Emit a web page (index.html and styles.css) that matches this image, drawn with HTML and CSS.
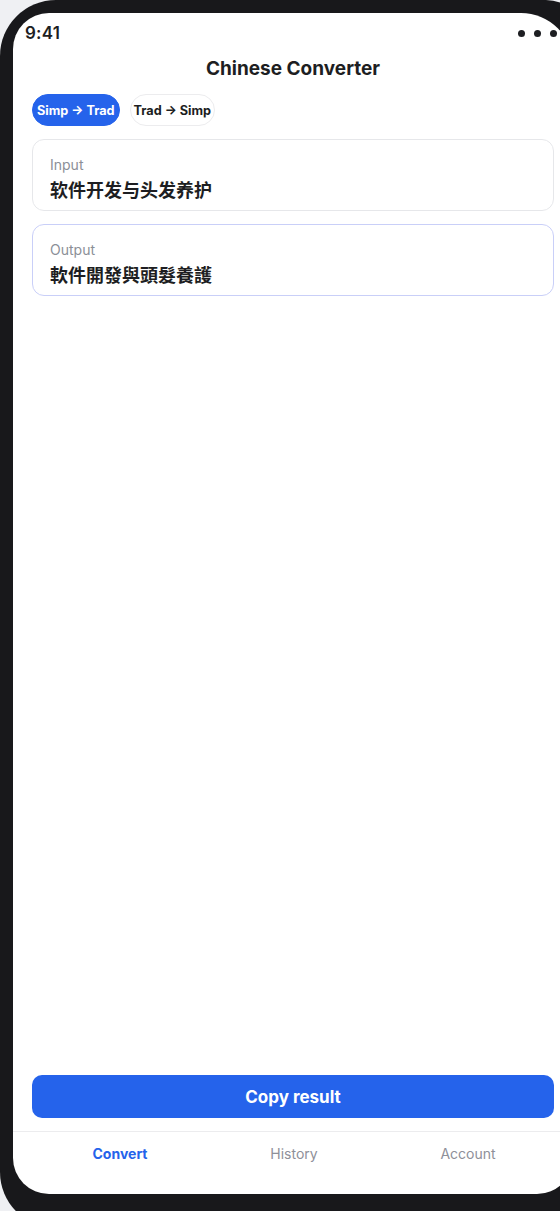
FILE: index.html
```html
<!DOCTYPE html>
<html lang="en">
<head>
<meta charset="utf-8">
<title>Chinese Converter</title>
<link rel="stylesheet" href="styles.css">
</head>
<body>
<div class="device">
  <div class="screen">
    <div class="status">
      <span class="time">9:41</span>
      <span class="dots"><i></i><i></i><i></i></span>
    </div>
    <h1 class="title">Chinese Converter</h1>
    <div class="modes">
      <button class="pill pill-active">Simp → Trad</button>
      <button class="pill">Trad → Simp</button>
    </div>
    <div class="card">
      <div class="label">Input</div>
      <div class="value">软件开发与头发养护</div>
    </div>
    <div class="card card-output">
      <div class="label">Output</div>
      <div class="value">軟件開發與頭髮養護</div>
    </div>
    <div class="spacer"></div>
    <button class="copy">Copy result</button>
    <nav class="tabs">
      <span class="tab tab-active">Convert</span>
      <span class="tab">History</span>
      <span class="tab">Account</span>
    </nav>
  </div>
</div>
</body>
</html>
```
FILE: styles.css
```css
* { box-sizing: border-box; }
html, body {
  margin: 0;
  padding: 0;
  background: #eff0f3;
  overflow: hidden;
  height: 1211px;
}
body {
  font-family: Inter, "Noto Sans", "Noto Sans CJK SC", sans-serif;
  color: #1d1e22;
}
.device {
  width: 586px;
  height: 1228px;
  background: #18181b;
  border-radius: 56px 40px 56px 56px;
  padding: 13px;
}
.screen {
  width: 560px;
  height: 1181px;
  background: #ffffff;
  border-radius: 36px 52px 36px 36px;
  overflow: hidden;
  display: flex;
  flex-direction: column;
}
.status {
  height: 40px;
  display: flex;
  align-items: center;
  justify-content: space-between;
  padding: 0 16px 0 12px;
}
.time {
  font-size: 17px;
  font-weight: 600;
  letter-spacing: 0.2px;
  color: #1d1e22;
}
.dots {
  display: flex;
  gap: 9px;
}
.dots i {
  display: block;
  width: 7px;
  height: 7px;
  border-radius: 50%;
  background: #1d1e22;
}
.title {
  margin: 0;
  height: 32px;
  line-height: 32px;
  text-align: center;
  font-size: 19px;
  font-weight: 700;
  color: #1d1e22;
}
.modes {
  margin-top: 9px;
  padding: 0 19px;
  display: flex;
  gap: 10px;
}
.pill {
  height: 32px;
  border-radius: 16px;
  font-family: Inter, "Noto Sans", sans-serif;
  font-size: 12.7px;
  font-weight: 700;
  padding: 0 3px;
  border: 1px solid #ececee;
  background: #ffffff;
  color: #1d1e22;
  cursor: pointer;
}
.pill-active {
  background: #2563eb;
  border-color: #2563eb;
  color: #ffffff;
  padding: 0 4px;
}
.card {
  margin: 13px 19px 0 19px;
  height: 72px;
  border: 1px solid #e6e7ea;
  border-radius: 12px;
  padding: 15px 17px;
}
.card-output {
  border-color: #c9cff8;
}
.label {
  font-size: 14px;
  line-height: 20px;
  color: #8b8f97;
}
.value {
  margin-top: 3px;
  font-family: Inter, "Noto Sans CJK SC", sans-serif;
  font-size: 18px;
  line-height: 26px;
  font-weight: 700;
  color: #1d1e22;
}
.card-output .value {
  font-family: Inter, "Noto Sans CJK TC", "Noto Sans CJK SC", sans-serif;
}
.spacer { flex: 1; }
.copy {
  margin: 0 19px 13px 19px;
  height: 43px;
  border: none;
  border-radius: 10px;
  background: #2563eb;
  color: #ffffff;
  font-family: Inter, "Noto Sans", sans-serif;
  font-size: 17px;
  font-weight: 700;
  cursor: pointer;
}
.tabs {
  border-top: 1px solid #ececee;
  height: 63px;
  padding: 0 18px 0 20px;
  display: grid;
  grid-template-columns: 1fr 1fr 1fr;
  align-content: start;
}
.tab {
  height: 44px;
  line-height: 44px;
  text-align: center;
  font-size: 14px;
  color: #8e9099;
}
.tab-active {
  color: #2563eb;
  font-weight: 700;
}
```
